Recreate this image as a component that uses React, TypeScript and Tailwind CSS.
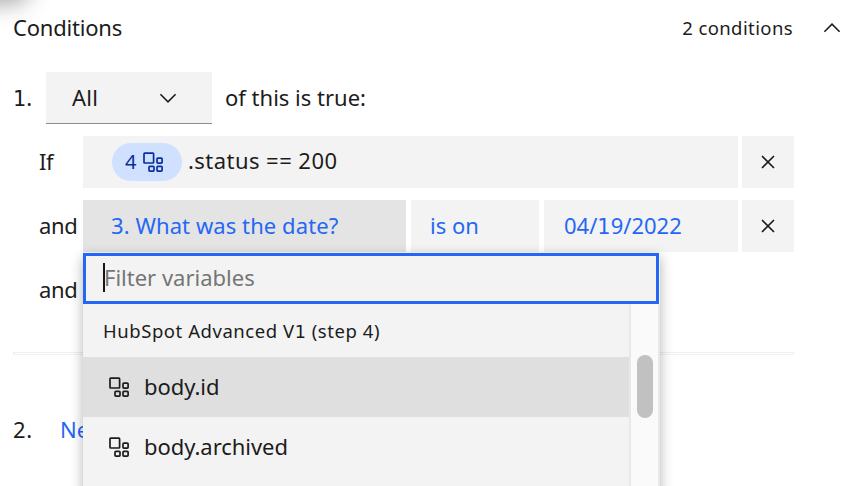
import type { ReactNode } from "react";

function StepIcon({ className = "" }: { className?: string }) {
  return (
    <svg width="21" height="21" viewBox="0 0 21 21" fill="none" stroke="currentColor" strokeWidth="1.7" className={"shrink-0 " + className}>
      <rect x="1" y="1.2" width="9.6" height="9.8" rx="0.7" />
      <rect x="14" y="6.2" width="5.1" height="4.9" rx="0.9" />
      <rect x="6" y="14.4" width="5" height="4.8" rx="0.9" />
      <rect x="14" y="14.4" width="5.1" height="4.8" rx="0.9" />
    </svg>
  );
}

function Chevron({ up = false }: { up?: boolean }) {
  return (
    <svg width="18" height="12" viewBox="0 0 18 12" fill="none" stroke="currentColor" strokeWidth="1.6" className="shrink-0">
      <path d={up ? "M1.4 9.7 9 2.2l7.6 7.5" : "M1.4 2.3 9 9.8l7.6-7.5"} />
    </svg>
  );
}

function RemoveButton() {
  return (
    <button aria-label="Remove" className="ml-1 flex h-13 w-13 items-center justify-center bg-[#f3f3f3]">
      <svg width="14" height="14" viewBox="0 0 14 14" stroke="currentColor" strokeWidth="1.7">
        <path d="M1 1l12 12M13 1L1 13" />
      </svg>
    </button>
  );
}

function One() {
  return <span className="font-['DejaVu_Sans'] text-[0.95em]">1</span>;
}

function Row({ label, children }: { label: string; children?: ReactNode }) {
  return (
    <div className="flex h-13 items-center">
      <span className="w-11 pb-0.5 tracking-[-0.4px]">{label}</span>
      {children}
    </div>
  );
}

function Option({ name, active = false }: { name: string; active?: boolean }) {
  return (
    <li className={"flex h-15 items-center gap-[14px] pl-[26px] " + (active ? "bg-[#dfdfdf]" : "")}>
      <StepIcon />
      <span className="pb-0.5 tracking-[-0.05px]">{name}</span>
    </li>
  );
}

export default function App() {
  return (
    <div className="relative h-[486px] w-[866px] overflow-hidden bg-white font-['Noto_Sans',sans-serif] text-[22px] leading-7 whitespace-nowrap text-[#1c1c1c]">
      <div className="absolute -top-8 -left-8 h-7 w-14 rounded-full shadow-[0_0_22px_8px_rgba(0,0,0,0.35)]" />
      <header className="flex h-14 items-center pl-[13px]">
        <h2 className="pb-0.5 tracking-[-0.2px]">Conditions</h2>
        <span className="ml-auto text-[18.5px] tracking-[0.4px]">2 conditions</span>
        <button aria-label="Collapse" className="mr-[25px] ml-[30px]">
          <Chevron up />
        </button>
      </header>

      <section className="pt-4 pl-[13px]">
        <div className="flex h-13 items-center">
          <span className="w-[33px]"><One />.</span>
          <button className="flex h-13 w-[166px] items-center justify-between border-b border-[#8d8d8d] bg-[#f3f3f3] pr-[35px] pl-[26px]">
            <span className="pb-px tracking-[0.3px]">All</span>
            <Chevron />
          </button>
          <span className="ml-[13px] pb-0.5">of this is true:</span>
        </div>

        <div className="mt-3 flex flex-col gap-3 pl-[26px]">
          <Row label="If">
            <div className="flex h-13 w-[655px] items-center bg-[#f3f3f3] pl-[29px]">
              <span className="flex h-[38px] w-[70px] items-center gap-[7px] rounded-full bg-[#d0e0ff] pl-[13px] text-[20px] text-[#0a2f9c]">
                4
                <StepIcon />
              </span>
              <span className="ml-[6px] pb-[5px] tracking-[0.45px]">.status == 200</span>
            </div>
            <RemoveButton />
          </Row>
          <Row label="and">
            <div className="flex gap-[5px] text-[#2567f5]">
              <div className="flex h-13 w-[323px] items-center bg-[#e4e4e4] pb-0.5 pl-[28px] tracking-[0.08px]">3. What was the date?</div>
              <div className="flex h-13 w-32 items-center bg-[#f3f3f3] pb-0.5 pl-[19px]">is on</div>
              <div className="flex h-13 w-[194px] items-center bg-[#f3f3f3] pl-[20px]">
                <span>04/<One />9/2022</span>
              </div>
            </div>
            <RemoveButton />
          </Row>
          <Row label="and" />
        </div>

        <div className="mt-[36px] h-[3px] w-[781px] border border-[#f0f0f0]" />

        <div className="mt-[49px] flex h-13 items-center pb-0.5">
          <span className="w-[47px] tracking-[0.6px]">2.</span>
          <span className="text-[#2567f5]">New</span>
        </div>
      </section>

      <div className="absolute top-[253px] left-[83px] flex h-[260px] w-[577px] flex-col bg-[#f3f3f3] shadow-[0_4px_12px_rgba(0,0,0,0.3)]">
        <div className="flex h-[51px] w-[576px] shrink-0 items-center border-[3px] border-[#2567f5] pb-0.5 pl-[17px] text-[#757575]">
          <span className="h-[29px] w-[2px] bg-[#161616]" />
          <span className="-ml-[1px] pb-px">Filter variables</span>
        </div>
        <div className="flex min-h-0 flex-1">
          <ul className="w-[546px]">
            <li className="flex h-[53px] items-center pt-0.5 pl-5 text-[18.5px] tracking-[0.55px]">
              <span>HubSpot Advanced V<One /> (step 4)</span>
            </li>
            <Option name="body.id" active />
            <Option name="body.archived" />
          </ul>
          <div className="w-[31px] border-x-2 border-[#e8e8e8] bg-[#fafafa] pt-[51px] pl-[6px]">
            <div className="h-[63px] w-4 rounded-full bg-[#c1c1c1]" />
          </div>
        </div>
      </div>
    </div>
  );
}
